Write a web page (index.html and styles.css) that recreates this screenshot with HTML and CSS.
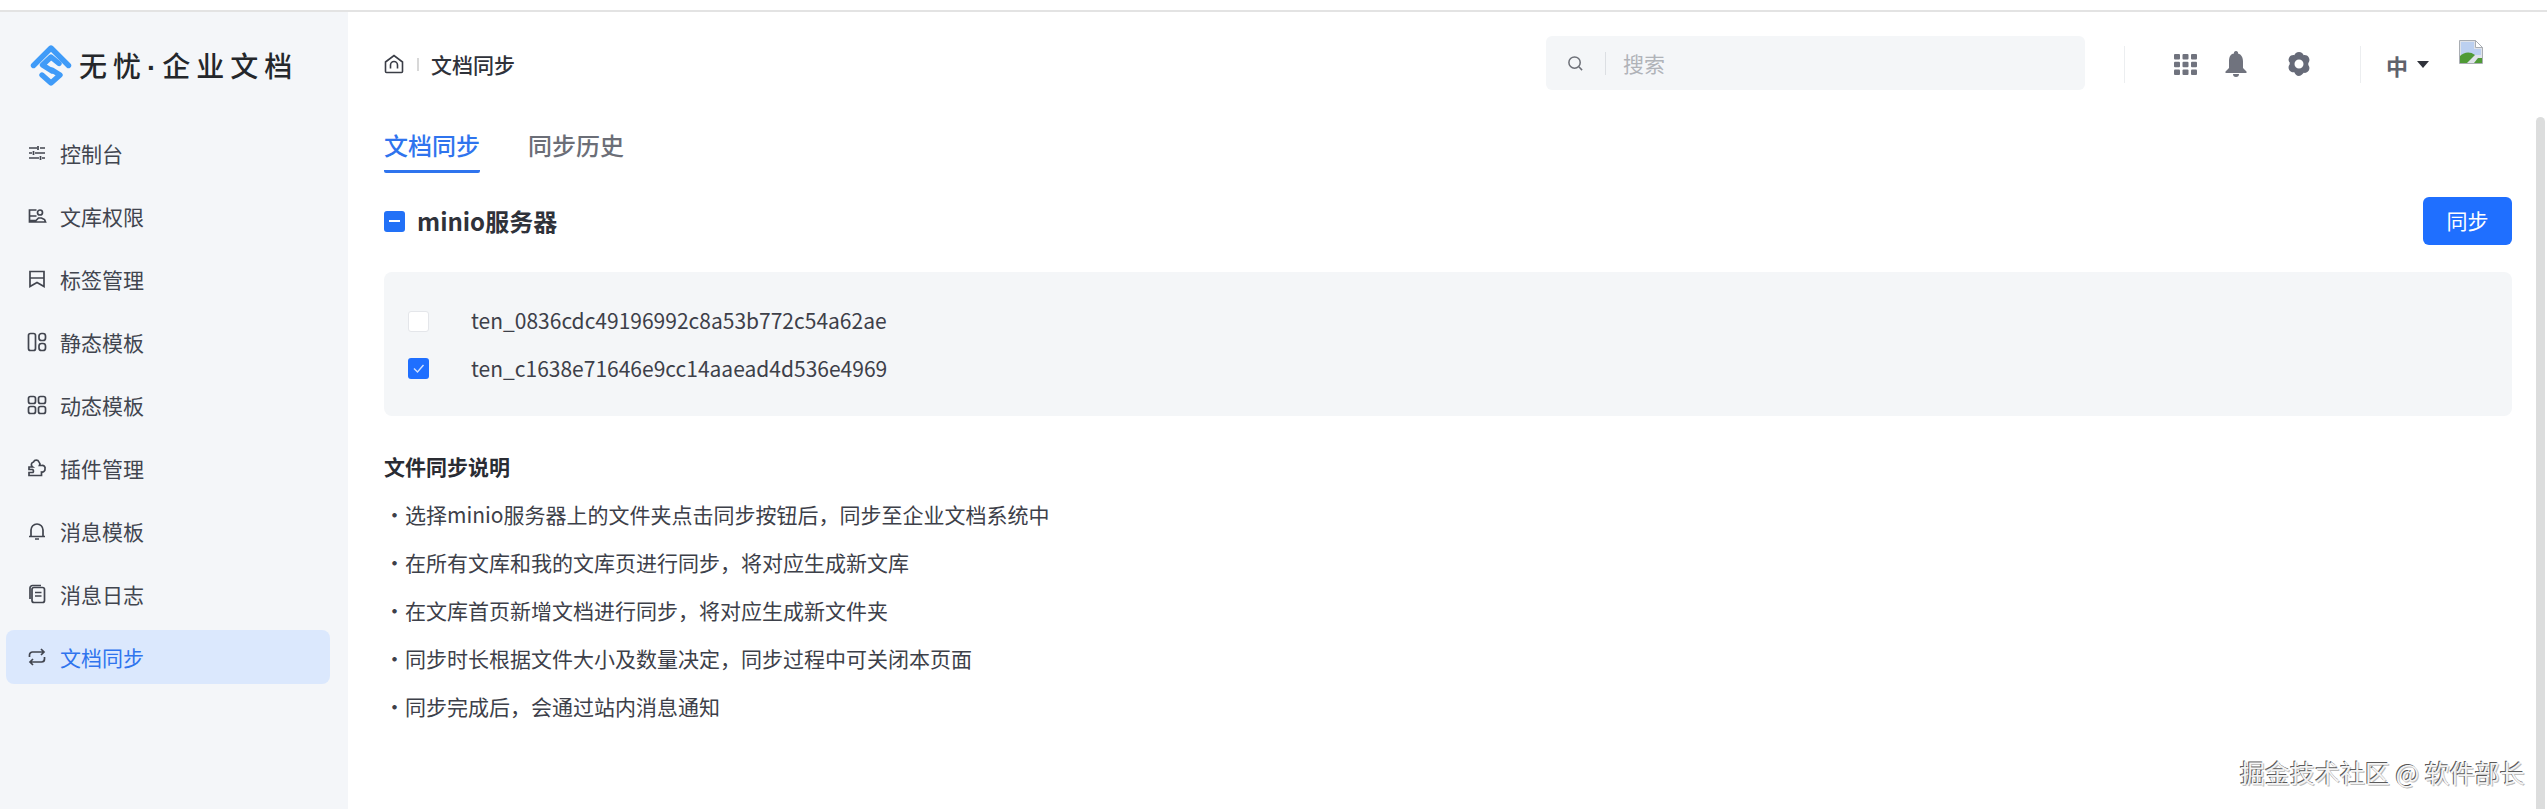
FILE: index.html
```html
<!DOCTYPE html>
<html lang="zh-CN">
<head>
<meta charset="utf-8">
<title>文档同步</title>
<link rel="stylesheet" href="styles.css">
</head>
<body>
<div class="topstrip"></div>
<div class="app">
  <aside class="sidebar">
    <div class="brand">
      <svg class="brand-mark" viewBox="0 0 42 42" fill="none" stroke="#3f9bf8" stroke-width="5.4" stroke-linejoin="round" stroke-linecap="round">
        <path d="M3.500 21.500 21 4l17.500 17.500"/>
        <path d="M29 19.500 21 13l-8.500 8 9.500 6"/>
        <path d="M12 31l9 8 9-8-8-5"/>
      </svg>
      <span class="brand-name">无忧<span class="brand-dot">·</span>企业文档</span>
    </div>
    <nav class="nav">
      <a class="nav-item">
        <svg class="nav-icon" viewBox="0 0 20 20"><path d="M2 5h8M13 5h5M2 10h3M8 10h10M2 15h10M15 15h3M11 3v4M6.500 8v4M13.500 13v4"/></svg>
        <span class="nav-label">控制台</span>
      </a>
      <a class="nav-item">
        <svg class="nav-icon" viewBox="0 0 20 20"><path d="M2.500 8V4h7M2.500 8v8h16l-1-2.500-3-1.500h-3l-2.500 2.500H2.500M2.500 10h7"/><circle cx="13" cy="6.500" r="2.500"/></svg>
        <span class="nav-label">文库权限</span>
      </a>
      <a class="nav-item">
        <svg class="nav-icon" viewBox="0 0 20 20"><path d="M3 2.500h14v15l-7-4-7 4zM3 9h14"/></svg>
        <span class="nav-label">标签管理</span>
      </a>
      <a class="nav-item">
        <svg class="nav-icon" viewBox="0 0 20 20"><rect x="1.500" y="1.500" width="7" height="17" rx="2"/><rect x="12" y="1.500" width="6.500" height="7" rx="2.500"/><rect x="12" y="11.500" width="6.500" height="7" rx="2.500"/></svg>
        <span class="nav-label">静态模板</span>
      </a>
      <a class="nav-item">
        <svg class="nav-icon" viewBox="0 0 20 20"><rect x="1.500" y="1.500" width="7" height="7" rx="2"/><rect x="11.500" y="1.500" width="7" height="7" rx="2"/><rect x="1.500" y="11.500" width="7" height="7" rx="2"/><rect x="11.500" y="11.500" width="7" height="7" rx="2"/></svg>
        <span class="nav-label">动态模板</span>
      </a>
      <a class="nav-item">
        <svg class="nav-icon" viewBox="0 0 20 20"><path d="M2 9h3.500a2.800 2.800 0 0 1 1-5 3 3 0 0 1 5.500 0 3 3 0 0 1 .5 3.500h2a2.800 2.800 0 0 1 3.500 3.500 2.800 2.800 0 0 1-3.500 3v3.500H2v-3h4a2 2 0 0 0-.5-3H2z"/></svg>
        <span class="nav-label">插件管理</span>
      </a>
      <a class="nav-item">
        <svg class="nav-icon" viewBox="0 0 20 20"><path d="M2 15.500h16M4 15.500V9a6 6 0 0 1 12 0v6.500M8 18h4"/></svg>
        <span class="nav-label">消息模板</span>
      </a>
      <a class="nav-item">
        <svg class="nav-icon" viewBox="0 0 20 20"><rect x="5" y="3.500" width="12.500" height="15" rx="2"/><path d="M3 15V4a2.500 2.500 0 0 1 2.500-2.500H14M8 8.500h6.500M8 12h6.500"/></svg>
        <span class="nav-label">消息日志</span>
      </a>
      <a class="nav-item is-active">
        <svg class="nav-icon" viewBox="0 0 20 20"><path d="M2.500 10V8a3 3 0 0 1 3-3H17M14 2l3 3-3 3M17.500 10v2a3 3 0 0 1-3 3H3M6 18l-3-3 3-3"/></svg>
        <span class="nav-label">文档同步</span>
      </a>
    </nav>
  </aside>
  <main class="main">
    <header class="header">
      <div class="crumbs">
        <svg class="home-icon" viewBox="0 0 20 20"><path d="M1.500 8 10 1.500 18.500 8v9.500a1 1 0 0 1-1 1h-15a1 1 0 0 1-1-1z"/><path d="M6.500 14.500V11a3.500 3.500 0 0 1 7 0v3.500"/></svg>
        <i class="crumb-sep"></i>
        <span class="crumb-text">文档同步</span>
      </div>
      <div class="search">
        <svg class="search-icon" viewBox="0 0 18 18"><circle cx="8" cy="8" r="6"/><path d="m12.500 12.500 3.500 3.500"/></svg>
        <i class="search-sep"></i>
        <span class="search-text">搜索</span>
      </div>
      <i class="head-sep head-sep-a"></i>
      <svg class="grid-icon" viewBox="0 0 23 21"><rect x="0" y="0" width="6" height="5.500" rx="1"/><rect x="8.500" y="0" width="6" height="5.500" rx="1"/><rect x="17" y="0" width="6" height="5.500" rx="1"/><rect x="0" y="7.750" width="6" height="5.500" rx="1"/><rect x="8.500" y="7.750" width="6" height="5.500" rx="1"/><rect x="17" y="7.750" width="6" height="5.500" rx="1"/><rect x="0" y="15.500" width="6" height="5.500" rx="1"/><rect x="8.500" y="15.500" width="6" height="5.500" rx="1"/><rect x="17" y="15.500" width="6" height="5.500" rx="1"/></svg>
      <svg class="bell-icon" viewBox="0 0 22 26"><path d="M11 0a2 2 0 0 1 2 2.500c3.500 1 5 4 5 8V17l3.500 3.500V22H.5v-1.500L4 17v-6.500c0-4.500 1.500-7.500 5-8A2 2 0 0 1 11 0zM8 23h6a3 3 0 0 1-6 0z"/></svg>
      <svg class="gear-icon" viewBox="0 0 24 24"><path fill-rule="evenodd" d="M12 0c2.500 0 4 1.500 4.700 3.200 1.800-.3 3.900.2 5.100 2.300 1.200 2.100.6 4.200-.5 5.600v1.800c1.100 1.400 1.700 3.500.5 5.600-1.200 2.100-3.300 2.600-5.100 2.300C16 21.500 14.500 24 12 24s-4-2.500-4.700-3.800c-1.800.3-3.900-.2-5.100-2.300-1.200-2.100-.6-4.200.5-5.600v-1.800C1.600 9.100 1 7.600 2.200 5.500c1.200-2.100 3.300-2.600 5.100-2.300C8 1.500 9.500 0 12 0zm0 7.500a4.500 4.500 0 1 0 0 9 4.500 4.500 0 0 0 0-9z"/></svg>
      <i class="head-sep head-sep-b"></i>
      <span class="lang">中</span>
      <i class="caret"></i>
      <svg class="broken-img" viewBox="0 0 24 24"><path fill="#dfe3ea" stroke="#a9adb3" d="M.5.500h16l7 7v16H.5z"/><path fill="#fff" stroke="#a9adb3" d="M16.500.500v7h7z"/><path fill="#bcd0f0" d="M2 2h13v7h7v6H2z"/><path fill="#4f9a35" d="M1 23v-7c4-4 10-5 15-1l-8 8z"/><path fill="#4f9a35" d="m19 18 4 0v5h-8z"/></svg>
    </header>
    <section class="content">
      <div class="tabs">
        <span class="tab is-current">文档同步</span>
        <span class="tab">同步历史</span>
      </div>
      <div class="server-row">
        <span class="check check-partial"><i></i></span>
        <h2 class="server-name">minio服务器</h2>
        <button class="sync-btn" type="button">同步</button>
      </div>
      <div class="folder-panel">
        <div class="folder-row">
          <span class="check check-empty"></span>
          <span class="folder-name">ten_0836cdc49196992c8a53b772c54a62ae</span>
        </div>
        <div class="folder-row">
          <span class="check check-on"><svg viewBox="0 0 21 21"><path d="m6 10.500 3.500 3.500 6-7"/></svg></span>
          <span class="folder-name">ten_c1638e71646e9cc14aaead4d536e4969</span>
        </div>
      </div>
      <h3 class="notes-title">文件同步说明</h3>
      <p class="note">・选择minio服务器上的文件夹点击同步按钮后，同步至企业文档系统中</p>
      <p class="note">・在所有文库和我的文库页进行同步，将对应生成新文库</p>
      <p class="note">・在文库首页新增文档进行同步，将对应生成新文件夹</p>
      <p class="note">・同步时长根据文件大小及数量决定，同步过程中可关闭本页面</p>
      <p class="note">・同步完成后，会通过站内消息通知</p>
    </section>
  </main>
</div>
<i class="scrollbar"></i>
<div class="watermark">掘金技术社区 @ 软件部长</div>
</body>
</html>
```
FILE: styles.css
```css
* { box-sizing: border-box; }
html, body { margin: 0; height: 100%; overflow: hidden; }
body {
  background: #fff;
  color: #3a3d46;
  font-family: "Noto Sans CJK SC", "Noto Sans", sans-serif;
  font-size: 21px;
  display: flex;
  flex-direction: column;
}
i { display: block; }
.topstrip { height: 12px; flex: none; border-bottom: 2px solid #e3e3e3; }
.app { flex: 1; display: flex; min-height: 0; }

.sidebar { width: 348px; flex: none; background: #f4f6f9; }
.brand { height: 106px; display: flex; align-items: center; padding-left: 30px; gap: 7px; }
.brand-mark { width: 42px; height: 42px; flex: none; }
.brand-name { font-size: 28px; font-weight: 500; letter-spacing: 6px; color: #24272b; white-space: nowrap; }
.brand-dot { font-family: "Liberation Sans", sans-serif; font-weight: 700; letter-spacing: 6px; }
.nav { display: flex; flex-direction: column; gap: 9px; padding: 8px 18px 0 6px; }
.nav-item { height: 54px; display: flex; align-items: center; gap: 13px; padding-left: 21px; border-radius: 8px; color: #41454f; }
.nav-label { line-height: 30px; margin-top: -1px; }
.nav-icon { width: 20px; height: 20px; flex: none; fill: none; stroke: #41454f; stroke-width: 1.7; }
.nav-item.is-active { background: #dbe8fd; color: #2f74ee; }

.main { flex: 1; min-width: 0; padding: 0 35px 0 36px; }
.header { height: 104px; display: flex; align-items: center; }
.crumbs { display: flex; align-items: center; width: 1162px; flex: none; }
.home-icon { width: 20px; height: 20px; fill: none; stroke: #3a3d46; stroke-width: 1.6; }
.crumb-sep { width: 2px; height: 13px; background: #d8d8d8; margin: 0 12px 0 13px; }
.crumb-text { font-weight: 500; color: #2f323a; line-height: 30px; margin-top: -1px; }
.search { width: 539px; height: 54px; flex: none; display: flex; align-items: center; background: #f4f6f8; border-radius: 6px; padding-left: 21px; margin-top: -2px; }
.search-icon { width: 17px; height: 17px; fill: none; stroke: #6d7078; stroke-width: 1.6; }
.search-sep { width: 1px; height: 23px; background: #dcdfe3; margin: 0 17px 0 21px; }
.search-text { color: #b0b3b8; }
.head-sep { width: 1px; height: 37px; background: #eceef0; flex: none; }
.head-sep-a { margin: 0 49px 0 39px; }
.grid-icon { width: 23px; height: 21px; fill: #70737e; flex: none; }
.bell-icon { width: 22px; height: 26px; fill: #70737e; flex: none; margin-left: 28px; }
.gear-icon { width: 24px; height: 24px; fill: #666a78; flex: none; margin-left: 40px; }
.head-sep-b { margin: 0 25px 0 49px; }
.lang { color: #5f626c; font-weight: 700; font-size: 22px; line-height: 1; margin-top: 1px; }
.caret { width: 0; height: 0; border-left: 6px solid transparent; border-right: 6px solid transparent; border-top: 7px solid #2f323a; margin-left: 9px; }
.broken-img { width: 24px; height: 24px; flex: none; margin: -24px 0 0 30px; }

.tabs { display: flex; gap: 48px; padding-top: 12px; }
.tab { font-size: 24px; font-weight: 500; line-height: 33px; height: 45px; color: #6b6e77; }
.tab.is-current { color: #2f74ee; border-bottom: 3px solid #2f74ee; border-radius: 0 0 2px 2px; }
.server-row { display: flex; align-items: center; margin-top: 24px; height: 48px; }
.check { width: 21px; height: 21px; flex: none; border-radius: 3px; display: flex; align-items: center; justify-content: center; }
.check-partial { background: #2271f7; }
.check-partial i { width: 11px; height: 2px; background: #fff; }
.server-name { margin: -2px 0 0 12px; flex: 1; font-size: 24px; font-weight: 700; color: #2f323a; }
.sync-btn { width: 89px; height: 48px; border: 0; border-radius: 6px; padding: 0 0 3px; background: #1f6fff; color: #fff; font: inherit; }
.folder-panel { margin-top: 27px; height: 144px; padding: 25px 0 23px 24px; background: #f4f6f8; border-radius: 8px; }
.folder-row { height: 48px; display: flex; align-items: center; gap: 42px; }
.check-empty { background: #fff; border: 1px solid #e4e6ea; }
.check-on { background: #1f6fff; margin-top: -1px; }
.check-on svg { width: 21px; height: 21px; fill: none; stroke: #cfe0ff; stroke-width: 1.4; }
.folder-name { color: #3d4049; line-height: 30px; margin-top: -3px; }
.notes-title { margin: 26px 0 0; font-size: 21px; line-height: 48px; font-weight: 700; color: #2a2c33; }
.note { margin: 0; line-height: 48px; color: #3d4049; }

.scrollbar { position: absolute; left: 2536px; top: 117px; bottom: 0; width: 9px; background: #dcdddd; border-radius: 5px 5px 0 0; }
.watermark { position: absolute; left: 2240px; top: 755px; font-size: 25px; line-height: 35px; color: #f4f4f4; white-space: nowrap; text-shadow: -1px -1px 0 #5a5a5a, 1px 1px 0 #bdbdbd; }
```
